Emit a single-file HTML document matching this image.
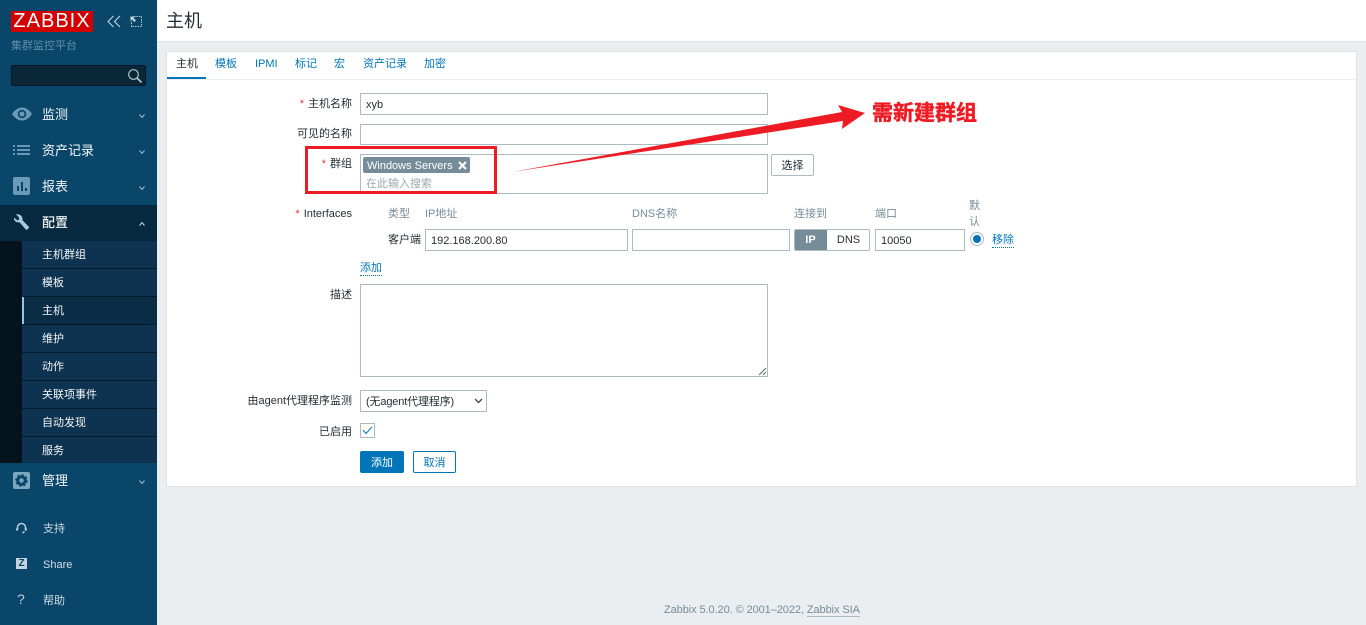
<!DOCTYPE html>
<html lang="zh">
<head>
<meta charset="utf-8">
<title>主机</title>
<style>
html,body{margin:0;padding:0;width:1366px;height:625px;overflow:hidden;background:#ebeef0}
body{position:relative;font-family:"Liberation Sans","Noto Sans CJK SC",sans-serif;font-size:11px;color:#1f2c33}
.a{position:absolute;white-space:nowrap}
.side{position:absolute;left:0;top:0;width:157px;height:625px;background:#0a466a;overflow:hidden}
.m{position:absolute;left:42px;color:#f2f6f8;font-size:13px;line-height:18px;white-space:nowrap}
.s{position:absolute;left:22px;width:135px;height:27px;background:#0e3350;border-bottom:1px solid #04192a;color:#f2f6f8;line-height:29px;text-indent:20px;font-size:11px}
.f{position:absolute;left:43px;color:#cfdde6;font-size:11px;line-height:16px;white-space:nowrap}
.l{position:absolute;right:1014px;font-size:11px;line-height:16px;white-space:nowrap;color:#1f2c33}
.l b{color:#e33734;font-weight:normal;margin-right:4px}
.i{position:absolute;box-sizing:border-box;background:#fff;border:1px solid #acbbc2;font-size:11px;line-height:22px;padding-left:5px;color:#1f2c33;white-space:nowrap}
.h{position:absolute;font-size:11px;line-height:14px;color:#768d99;white-space:nowrap}
.t{position:absolute;top:57px;font-size:11px;line-height:14px;color:#0275b8;white-space:nowrap}
.ln{color:#0275b8;border-bottom:1px dotted #0275b8;position:absolute;line-height:13px;font-size:11px;white-space:nowrap}
svg{position:absolute;display:block}
</style>
</head>
<body>
<div class="a" style="left:157px;top:0;width:1209px;height:41px;background:#fff;border-bottom:1px solid #dfe4e7"></div>
<div class="a" style="left:166px;top:9px;font-size:18px;line-height:25px;color:#1f2c33">主机</div>

<div class="side">
  <div class="a" style="left:11px;top:11px;width:82px;height:21px;background:#d40000;color:#fff;font-size:20px;line-height:21px;text-align:center;letter-spacing:1px">ZABBIX</div>
  <svg style="left:107px;top:15px" width="14" height="13" viewBox="0 0 14 13" fill="none" stroke="#c4d3dc" stroke-width="1.100"><path d="M6.500 1 1 6.500 6.500 12M13 1 7.500 6.500 13 12"/></svg>
  <svg style="left:130px;top:16px" width="12" height="11" viewBox="0 0 12 11" fill="none" stroke="#b5c8d3"><path d="M4 .5H11.500V10.500H1.500V5" stroke-dasharray="1.500 1"/><path d="M.5.5H5L3.500 2 6 4.500 4.500 6 2 3.500.5 5Z" fill="#c9d8e0" stroke="none"/></svg>
  <div class="a" style="left:11px;top:38px;font-size:11px;line-height:16px;color:#5f8ea9">集群监控平台</div>
  <div class="a" style="left:11px;top:65px;width:135px;height:21px;box-sizing:border-box;background:#0a2738;border:1px solid #04192a;border-radius:2px"></div>
  <svg style="left:127px;top:68px" width="16" height="16" viewBox="0 0 16 16" fill="none" stroke="#a9bfcb" stroke-width="1.200"><circle cx="6.500" cy="6.500" r="4.800"/><path d="M10 10l4.500 4.500" stroke-width="1.800"/></svg>

  <svg style="left:12px;top:107px" width="20" height="14" viewBox="0 0 20 14"><path d="M0 7C3 2.500 6.500 .5 10 .5S17 2.500 20 7C17 11.500 13.500 13.500 10 13.500S3 11.500 0 7Z" fill="#6a9ab8"/><circle cx="10" cy="7" r="4.300" fill="#0a466a"/><circle cx="10" cy="7" r="2.500" fill="#6a9ab8"/></svg>
  <div class="m" style="top:106px">监测</div>
  <svg style="left:13px;top:145px" width="17" height="10" viewBox="0 0 17 10" fill="#6a9ab8"><path d="M0 0h2v2H0zM4 0h13v2H4zM0 4h2v2H0zM4 4h13v2H4zM0 8h2v2H0zM4 8h13v2H4z"/></svg>
  <div class="m" style="top:142px">资产记录</div>
  <svg style="left:13px;top:177px" width="17" height="18" viewBox="0 0 17 18"><rect width="17" height="18" rx="2" fill="#6a9ab8"/><path d="M4 9h2v5H4zM8 5h2v9H8zM12 11h2v3h-2z" fill="#0a466a"/></svg>
  <div class="m" style="top:178px">报表</div>

  <div class="a" style="left:0;top:205px;width:157px;height:36px;background:#07293f"></div>
  <svg style="left:13px;top:213px" width="17" height="18" viewBox="0 0 17 18"><path d="M3 1.500 6 4.500V6.500L4.500 7.500 1 4.500C.5 7.500 3 10 6.500 9.200L12.800 16.500C13.800 17.500 16.800 15 15.800 13.800L9.500 7.200C10 3.500 7 .5 3 1.500Z" fill="#a8c9dd"/></svg>
  <div class="m" style="top:214px;font-weight:500">配置</div>

  <div class="a" style="left:0;top:241px;width:22px;height:222px;background:#04141f"></div>
  <div class="s" style="top:241px">主机群组</div>
  <div class="s" style="top:269px">模板</div>
  <div class="s" style="top:297px;background:#0a2c44">主机</div>
  <div class="a" style="left:22px;top:297px;width:2px;height:27px;background:#8cc6ea"></div>
  <div class="s" style="top:325px">维护</div>
  <div class="s" style="top:353px">动作</div>
  <div class="s" style="top:381px">关联项事件</div>
  <div class="s" style="top:409px">自动发现</div>
  <div class="s" style="top:437px;height:26px;border-bottom:0">服务</div>

  <svg style="left:13px;top:472px" width="17" height="17" viewBox="0 0 17 17"><rect width="17" height="17" rx="2" fill="#7ba6c0"/><circle cx="8.500" cy="8.500" r="3.800" fill="none" stroke="#0a466a" stroke-width="3"/><circle cx="8.500" cy="8.500" r="5.500" fill="none" stroke="#0a466a" stroke-width="1.600" stroke-dasharray="2.200 2.100"/></svg>
  <div class="m" style="top:472px">管理</div>

  <svg style="left:16px;top:522px" width="11" height="12" viewBox="0 0 11 12" fill="none" stroke="#b5ccda" stroke-width="1.600"><path d="M1.500 8V5.500a4 4 0 0 1 8 0V8"/><path d="M1 6.500v2M10 6.500v2" stroke-width="2.200"/><path d="M8.500 9.500 6.500 11"/></svg>
  <div class="f" style="top:521px">支持</div>
  <div class="a" style="left:16px;top:558px;width:11px;height:11px;background:#c0d3df;color:#0a466a;font-size:10px;font-weight:bold;line-height:11px;text-align:center">Z</div>
  <div class="f" style="top:557px">Share</div>
  <div class="a" style="left:17px;top:591px;font-size:14px;line-height:17px;color:#b5ccda">?</div>
  <div class="f" style="top:593px">帮助</div>

  <svg style="left:139px;top:114px" width="6" height="4" viewBox="0 0 6 4" fill="none" stroke="#9fb8c7"><path d="M.5.5 3 3.500 5.500.5"/></svg>
  <svg style="left:139px;top:150px" width="6" height="4" viewBox="0 0 6 4" fill="none" stroke="#9fb8c7"><path d="M.5.5 3 3.500 5.500.5"/></svg>
  <svg style="left:139px;top:186px" width="6" height="4" viewBox="0 0 6 4" fill="none" stroke="#9fb8c7"><path d="M.5.5 3 3.500 5.500.5"/></svg>
  <svg style="left:139px;top:222px" width="6" height="4" viewBox="0 0 6 4" fill="none" stroke="#c4d3dc"><path d="M.5 3.500 3 .5 5.500 3.500"/></svg>
  <svg style="left:139px;top:480px" width="6" height="4" viewBox="0 0 6 4" fill="none" stroke="#9fb8c7"><path d="M.5.5 3 3.500 5.500.5"/></svg>
</div>

<div class="a" style="left:166px;top:51px;width:1191px;height:436px;box-sizing:border-box;background:#fff;border:1px solid #dfe4e7"></div>
<div class="a" style="left:167px;top:79px;width:1189px;height:1px;background:#ebeef0"></div>
<div class="a" style="left:167px;top:77px;width:39px;height:2px;background:#0275b8"></div>
<div class="t" style="left:176px;color:#1f2c33">主机</div>
<div class="t" style="left:215px">模板</div>
<div class="t" style="left:255px">IPMI</div>
<div class="t" style="left:295px">标记</div>
<div class="t" style="left:334px">宏</div>
<div class="t" style="left:363px">资产记录</div>
<div class="t" style="left:424px">加密</div>

<div class="l" style="top:96px"><b>*</b>主机名称</div>
<div class="i" style="left:360px;top:93px;width:408px;height:22px">xyb</div>
<div class="l" style="top:126px">可见的名称</div>
<div class="i" style="left:360px;top:124px;width:408px;height:21px"></div>
<div class="l" style="top:156px"><b>*</b>群组</div>
<div class="i" style="left:360px;top:154px;width:408px;height:40px"></div>
<div class="a" style="left:363px;top:157px;width:107px;height:16px;background:#768d99;border-radius:2px;color:#fff;line-height:18px;font-size:11px;text-indent:4px">Windows Servers</div>
<svg style="left:458px;top:161px" width="9" height="9" viewBox="0 0 9 9" stroke="#fff" stroke-width="2"><path d="M1 1l7 7M8 1 1 8"/></svg>
<div class="a" style="left:366px;top:176px;font-size:11px;line-height:16px;color:#9aa8b0">在此输入搜索</div>
<div class="a" style="left:771px;top:154px;width:43px;height:22px;box-sizing:border-box;border:1px solid #acbbc2;border-radius:2px;background:#fff;text-align:center;line-height:22px">选择</div>

<div class="l" style="top:206px"><b>*</b>Interfaces</div>
<div class="h" style="left:388px;top:207px">类型</div>
<div class="h" style="left:425px;top:207px">IP地址</div>
<div class="h" style="left:632px;top:207px">DNS名称</div>
<div class="h" style="left:794px;top:207px">连接到</div>
<div class="h" style="left:875px;top:207px">端口</div>
<div class="h" style="left:969px;top:198px;line-height:16px;white-space:normal;width:12px">默认</div>
<div class="a" style="left:388px;top:233px;line-height:14px">客户端</div>
<div class="i" style="left:425px;top:229px;width:203px;height:22px">192.168.200.80</div>
<div class="i" style="left:632px;top:229px;width:158px;height:22px"></div>
<div class="a" style="left:794px;top:229px;width:76px;height:22px;box-sizing:border-box;border:1px solid #acbbc2;border-radius:2px;background:#fff;overflow:hidden"><div class="a" style="left:-1px;top:-1px;width:33px;height:22px;background:#768d99;color:#fff;text-align:center;line-height:22px;font-weight:bold">IP</div><div class="a" style="left:32px;top:-1px;width:43px;height:22px;text-align:center;line-height:22px">DNS</div></div>
<div class="i" style="left:875px;top:229px;width:90px;height:22px">10050</div>
<div class="a" style="left:970px;top:232px;width:14px;height:14px;box-sizing:border-box;border:1px solid #acbbc2;border-radius:50%;background:#fff"></div>
<div class="a" style="left:973px;top:235px;width:8px;height:8px;border-radius:50%;background:#0275b8"></div>
<div class="ln" style="left:992px;top:234px">移除</div>
<div class="ln" style="left:360px;top:262px">添加</div>

<div class="l" style="top:287px">描述</div>
<div class="i" style="left:360px;top:284px;width:408px;height:93px"></div>
<svg style="left:758px;top:367px" width="9" height="9" viewBox="0 0 9 9" stroke="#5f6b72" fill="none"><path d="M1 8 8 1M5 8 8 5"/></svg>

<div class="l" style="top:393px">由agent代理程序监测</div>
<div class="i" style="left:360px;top:390px;width:127px;height:22px;color:#1f2c33;letter-spacing:-.15px">(无agent代理程序)</div>
<svg style="left:474px;top:398px" width="9" height="6" viewBox="0 0 9 6" fill="none" stroke="#39464e" stroke-width="1.300"><path d="M1 1 4.500 4.500 8 1"/></svg>

<div class="l" style="top:424px">已启用</div>
<div class="a" style="left:360px;top:423px;width:15px;height:15px;box-sizing:border-box;border:1px solid #acbbc2;background:#fff"></div>
<svg style="left:362px;top:426px" width="11" height="9" viewBox="0 0 11 9" fill="none" stroke="#0275b8" stroke-width="1"><path d="M1 4 4 7.500 10 1"/></svg>

<div class="a" style="left:360px;top:451px;width:44px;height:22px;background:#0275b8;border-radius:2px;color:#fff;text-align:center;line-height:24px">添加</div>
<div class="a" style="left:413px;top:451px;width:43px;height:22px;box-sizing:border-box;border:1px solid #0275b8;border-radius:2px;background:#fff;color:#0275b8;text-align:center;line-height:22px">取消</div>

<div class="a" style="left:305px;top:146px;width:192px;height:48px;box-sizing:border-box;border:3px solid #ed1c24"></div>
<svg style="left:505px;top:100px" width="365" height="80" viewBox="0 0 365 80"><path d="M7 72 337 12 333 5 360 13 337 29 338 21Z" fill="#ed1c24"/></svg>
<div class="a" style="left:872px;top:101px;font-size:21px;line-height:26px;font-weight:bold;color:#ed1c24;-webkit-text-stroke:.5px #ed1c24">需新建群组</div>

<div class="a" style="left:664px;top:603px;font-size:11px;line-height:15px;color:#768d99;letter-spacing:-.08px">Zabbix 5.0.20. © 2001–2022, <span style="border-bottom:1px solid #acbbc2">Zabbix SIA</span></div>
</body>
</html>
